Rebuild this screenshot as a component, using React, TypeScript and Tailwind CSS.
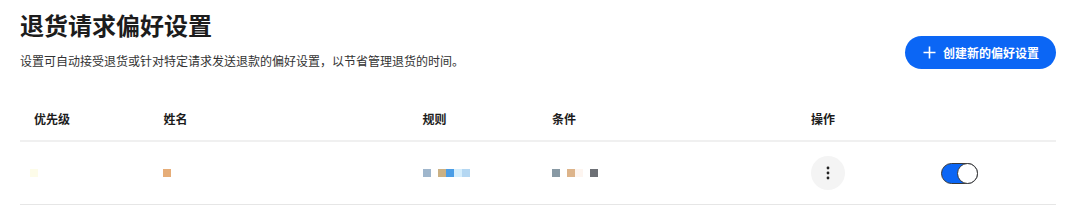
import { useState } from "react";

const font = { fontFamily: '"Noto Sans CJK SC", "Noto Sans", sans-serif' };

// pixelated (redacted) cell content
function Blocks({ colors }: { colors: (string | null)[] }) {
  return (
    <div className="flex items-center">
      {colors.map((c, i) =>
        c ? (
          <span key={i} className={`h-2 w-2 ${c}`} />
        ) : (
          <span key={i} className="h-2 w-[7px]" />
        )
      )}
    </div>
  );
}

function Toggle() {
  const [on, setOn] = useState(true);
  return (
    <button
      onClick={() => setOn(!on)}
      className={`relative flex h-[21px] w-[37px] items-center rounded-full border border-[#3a3a3a] ${
        on ? "bg-[#0b66f5]" : "bg-gray-300"
      }`}
    >
      <span
        className={`absolute top-[-1px] h-[21px] w-[21px] rounded-full border border-[#3a3a3a] bg-white ${
          on ? "right-[-1px]" : "left-[-1px]"
        }`}
      />
    </button>
  );
}

export default function App() {
  return (
    <div className="h-[216px] w-[1080px] bg-white pl-5 pr-6 pt-[11px] text-[#1c1c1c]" style={font}>
      <div className="flex items-end justify-between">
        <div>
          <h1 className="text-[24px] font-bold leading-[28px]">退货请求偏好设置</h1>
          <p className="mt-[14px] text-xs leading-4 text-[#333]">
            设置可自动接受退货或针对特定请求发送退款的偏好设置，以节省管理退货的时间。
          </p>
        </div>
        <button className="flex h-[33px] w-[151px] items-center gap-[7px] rounded-full bg-[#0b66f5] pl-[18px] text-xs font-bold text-white">
          <svg width="13" height="13" viewBox="0 0 13 13" fill="none" stroke="currentColor" strokeWidth="1.6">
            <path d="M6.5 0.5v12M0.5 6.5h12" />
          </svg>
          创建新的偏好设置
        </button>
      </div>

      <div className="mt-[29px]">
        <div className="grid h-[44px] grid-cols-[1fr_2fr_1fr_2fr_1fr_1fr] items-center border-b-2 border-[#f0f0f0] text-xs font-bold">
          <div className="pl-[14px]">优先级</div>
          <div className="pl-[14px]">姓名</div>
          <div className="pl-[14px]">规则</div>
          <div className="pl-[14px]">条件</div>
          <div className="pl-[14px]">操作</div>
          <div />
        </div>
        <div className="grid h-[63px] grid-cols-[1fr_2fr_1fr_2fr_1fr_1fr] items-center border-b border-[#e6e6e6]">
          <div className="pl-[10px]">
            <Blocks colors={["bg-[#fdfce9]"]} />
          </div>
          <div className="pl-[13px]">
            <Blocks colors={["bg-[#e6ad78]"]} />
          </div>
          <div className="pl-[14px]">
            <Blocks colors={["bg-[#9fb6cc]", null, "bg-[#cbb184]", "bg-[#4a9de6]", "bg-[#d5eefc]", "bg-[#b4d7f2]"]} />
          </div>
          <div className="pl-[14px]">
            <Blocks colors={["bg-[#8899a4]", null, "bg-[#ddb48a]", "bg-[#fdf5f0]", null, "bg-[#6d7075]"]} />
          </div>
          <div className="pl-[14px]">
            <button className="flex h-[34px] w-[34px] items-center justify-center rounded-full bg-[#f4f4f4]">
              <svg width="4" height="14" viewBox="0 0 4 14" fill="#222">
                <circle cx="2" cy="2" r="1.4" />
                <circle cx="2" cy="7" r="1.4" />
                <circle cx="2" cy="12" r="1.4" />
              </svg>
            </button>
          </div>
          <div className="pl-[14px]">
            <Toggle />
          </div>
        </div>
      </div>
    </div>
  );
}
